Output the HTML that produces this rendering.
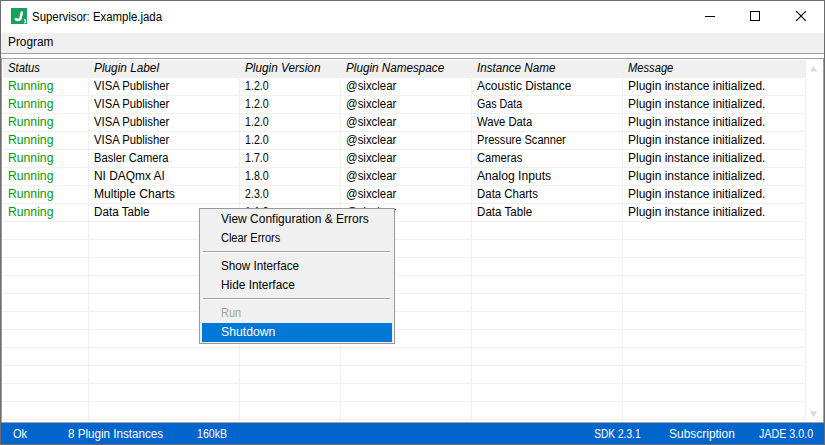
<!DOCTYPE html>
<html><head><meta charset="utf-8">
<style>
*{box-sizing:border-box}
html,body{margin:0;padding:0}
body{width:825px;height:445px;position:relative;overflow:hidden;background:#fff;font-family:"Liberation Sans",sans-serif;font-size:12px;color:#000}
.a{position:absolute}
.t{position:absolute;white-space:nowrap;line-height:18px;height:18px}
.vl{position:absolute;width:1px;background:#f0f0f0}
.hl{position:absolute;height:1px;background:#f0f0f0}
</style></head><body>
<div class="a" style="left:0;top:0;width:825px;height:445px;border:1px solid #6b6b6b"></div>
<svg class="a" style="left:11px;top:8px" width="16" height="16" viewBox="0 0 16 16">
<rect width="16" height="16" fill="#17a060"/>
<path d="M10.8 4.4 L9.6 9.9 Q9.1 11.9 6.8 11.9 Q5.5 11.9 4.8 11.1" stroke="#fff" stroke-width="2.5" fill="none" stroke-linecap="round"/>
<path d="M13.1 11.6 Q14.6 11.6 14.6 13 L14.6 13.6 Q14.6 14.8 13.1 14.8" stroke="#fff" stroke-width="1.3" fill="none"/>
</svg>
<div class="a" style="left:705px;top:16px;width:10px;height:1px;background:#000"></div>
<div class="a" style="left:750px;top:11px;width:10px;height:10px;border:1px solid #000"></div>
<svg class="a" style="left:796px;top:11px" width="10" height="10" viewBox="0 0 10 10"><path d="M0 0L10 10M10 0L0 10" stroke="#000" stroke-width="1.15"/></svg>
<div class="a" style="left:1px;top:33px;width:823px;height:21px;background:#f0f0f0;border-bottom:1px solid #a0a0a0"></div>
<div class="a" style="left:1px;top:58px;width:823px;height:365px;border:1px solid #a0a0a0"></div>
<div class="a" style="left:3px;top:60px;width:802px;height:18px;background:#f0f0f0"></div>
<div class="hl" style="left:2px;top:95px;width:803px"></div>
<div class="hl" style="left:2px;top:113px;width:803px"></div>
<div class="hl" style="left:2px;top:131px;width:803px"></div>
<div class="hl" style="left:2px;top:149px;width:803px"></div>
<div class="hl" style="left:2px;top:167px;width:803px"></div>
<div class="hl" style="left:2px;top:185px;width:803px"></div>
<div class="hl" style="left:2px;top:203px;width:803px"></div>
<div class="hl" style="left:2px;top:221px;width:803px"></div>
<div class="hl" style="left:2px;top:239px;width:803px"></div>
<div class="hl" style="left:2px;top:257px;width:803px"></div>
<div class="hl" style="left:2px;top:275px;width:803px"></div>
<div class="hl" style="left:2px;top:293px;width:803px"></div>
<div class="hl" style="left:2px;top:311px;width:803px"></div>
<div class="hl" style="left:2px;top:329px;width:803px"></div>
<div class="hl" style="left:2px;top:347px;width:803px"></div>
<div class="hl" style="left:2px;top:365px;width:803px"></div>
<div class="hl" style="left:2px;top:383px;width:803px"></div>
<div class="hl" style="left:2px;top:401px;width:803px"></div>
<div class="hl" style="left:2px;top:419px;width:803px"></div>
<div class="vl" style="left:88px;top:78px;height:344px"></div>
<div class="vl" style="left:239px;top:78px;height:344px"></div>
<div class="vl" style="left:340px;top:78px;height:344px"></div>
<div class="vl" style="left:471px;top:78px;height:344px"></div>
<div class="vl" style="left:622px;top:78px;height:344px"></div>
<div class="vl" style="left:805px;top:60px;height:361px"></div>
<svg class="a" style="left:809px;top:65px" width="10" height="8" viewBox="0 0 10 8"><path d="M1 6.5 L4.5 1 L8 6.5Z" fill="#dadada"/></svg>
<svg class="a" style="left:809px;top:410px" width="10" height="9" viewBox="0 0 10 9"><path d="M0.9 1.3 L4.6 7.2 L8.3 1.3Z" fill="#dadada"/></svg>
<div class="a" style="left:1px;top:423px;width:823px;height:21px;background:#0066cc"></div>
<div class="t" style="left:32px;top:8px;transform:scaleX(0.9507);transform-origin:1px 0">Supervisor: Example.jada</div>
<div class="t" style="left:8px;top:33px;transform:scaleX(0.9867);transform-origin:1px 0">Program</div>
<div class="t" style="left:8px;top:59px;transform:scaleX(0.9412);transform-origin:0px 0;font-style:italic">Status</div>
<div class="t" style="left:94px;top:59px;transform:scaleX(0.9851);transform-origin:0px 0;font-style:italic">Plugin Label</div>
<div class="t" style="left:245px;top:59px;transform:scaleX(0.9805);transform-origin:0px 0;font-style:italic">Plugin Version</div>
<div class="t" style="left:346px;top:59px;transform:scaleX(0.9752);transform-origin:0px 0;font-style:italic">Plugin Namespace</div>
<div class="t" style="left:477px;top:59px;transform:scaleX(0.9722);transform-origin:0px 0;font-style:italic">Instance Name</div>
<div class="t" style="left:628px;top:59px;transform:scaleX(0.9306);transform-origin:0px 0;font-style:italic">Message</div>
<div class="t" style="left:8px;top:77px;transform:scaleX(1.0163);transform-origin:1px 0;color:#0a960a">Running</div>
<div class="t" style="left:94px;top:77px;transform:scaleX(0.9413);transform-origin:0px 0">VISA Publisher</div>
<div class="t" style="left:245px;top:77px;transform:scaleX(0.8846);transform-origin:1px 0">1.2.0</div>
<div class="t" style="left:346px;top:77px;transform:scaleX(0.9519);transform-origin:1px 0">@sixclear</div>
<div class="t" style="left:477px;top:77px;transform:scaleX(0.9895);transform-origin:0px 0">Acoustic Distance</div>
<div class="t" style="left:628px;top:77px;transform:scaleX(1.0000);transform-origin:1px 0">Plugin instance initialized.</div>
<div class="t" style="left:8px;top:95px;transform:scaleX(1.0163);transform-origin:1px 0;color:#0a960a">Running</div>
<div class="t" style="left:94px;top:95px;transform:scaleX(0.9413);transform-origin:0px 0">VISA Publisher</div>
<div class="t" style="left:245px;top:95px;transform:scaleX(0.8846);transform-origin:1px 0">1.2.0</div>
<div class="t" style="left:346px;top:95px;transform:scaleX(0.9519);transform-origin:1px 0">@sixclear</div>
<div class="t" style="left:477px;top:95px;transform:scaleX(0.8922);transform-origin:0px 0">Gas Data</div>
<div class="t" style="left:628px;top:95px;transform:scaleX(1.0000);transform-origin:1px 0">Plugin instance initialized.</div>
<div class="t" style="left:8px;top:113px;transform:scaleX(1.0163);transform-origin:1px 0;color:#0a960a">Running</div>
<div class="t" style="left:94px;top:113px;transform:scaleX(0.9413);transform-origin:0px 0">VISA Publisher</div>
<div class="t" style="left:245px;top:113px;transform:scaleX(0.8846);transform-origin:1px 0">1.2.0</div>
<div class="t" style="left:346px;top:113px;transform:scaleX(0.9519);transform-origin:1px 0">@sixclear</div>
<div class="t" style="left:477px;top:113px;transform:scaleX(0.9373);transform-origin:0px 0">Wave Data</div>
<div class="t" style="left:628px;top:113px;transform:scaleX(1.0000);transform-origin:1px 0">Plugin instance initialized.</div>
<div class="t" style="left:8px;top:131px;transform:scaleX(1.0163);transform-origin:1px 0;color:#0a960a">Running</div>
<div class="t" style="left:94px;top:131px;transform:scaleX(0.9413);transform-origin:0px 0">VISA Publisher</div>
<div class="t" style="left:245px;top:131px;transform:scaleX(0.8846);transform-origin:1px 0">1.2.0</div>
<div class="t" style="left:346px;top:131px;transform:scaleX(0.9519);transform-origin:1px 0">@sixclear</div>
<div class="t" style="left:477px;top:131px;transform:scaleX(0.9232);transform-origin:1px 0">Pressure Scanner</div>
<div class="t" style="left:628px;top:131px;transform:scaleX(1.0000);transform-origin:1px 0">Plugin instance initialized.</div>
<div class="t" style="left:8px;top:149px;transform:scaleX(1.0163);transform-origin:1px 0;color:#0a960a">Running</div>
<div class="t" style="left:94px;top:149px;transform:scaleX(0.9278);transform-origin:1px 0">Basler Camera</div>
<div class="t" style="left:245px;top:149px;transform:scaleX(0.8846);transform-origin:1px 0">1.7.0</div>
<div class="t" style="left:346px;top:149px;transform:scaleX(0.9519);transform-origin:1px 0">@sixclear</div>
<div class="t" style="left:477px;top:149px;transform:scaleX(0.9286);transform-origin:0px 0">Cameras</div>
<div class="t" style="left:628px;top:149px;transform:scaleX(1.0000);transform-origin:1px 0">Plugin instance initialized.</div>
<div class="t" style="left:8px;top:167px;transform:scaleX(1.0163);transform-origin:1px 0;color:#0a960a">Running</div>
<div class="t" style="left:94px;top:167px;transform:scaleX(0.9914);transform-origin:1px 0">NI DAQmx AI</div>
<div class="t" style="left:245px;top:167px;transform:scaleX(0.8846);transform-origin:1px 0">1.8.0</div>
<div class="t" style="left:346px;top:167px;transform:scaleX(0.9519);transform-origin:1px 0">@sixclear</div>
<div class="t" style="left:477px;top:167px;transform:scaleX(1.0096);transform-origin:0px 0">Analog Inputs</div>
<div class="t" style="left:628px;top:167px;transform:scaleX(1.0000);transform-origin:1px 0">Plugin instance initialized.</div>
<div class="t" style="left:8px;top:185px;transform:scaleX(1.0163);transform-origin:1px 0;color:#0a960a">Running</div>
<div class="t" style="left:94px;top:185px;transform:scaleX(1.0114);transform-origin:1px 0">Multiple Charts</div>
<div class="t" style="left:245px;top:185px;transform:scaleX(0.8889);transform-origin:0px 0">2.3.0</div>
<div class="t" style="left:346px;top:185px;transform:scaleX(0.9519);transform-origin:1px 0">@sixclear</div>
<div class="t" style="left:477px;top:185px;transform:scaleX(0.9508);transform-origin:1px 0">Data Charts</div>
<div class="t" style="left:628px;top:185px;transform:scaleX(1.0000);transform-origin:1px 0">Plugin instance initialized.</div>
<div class="t" style="left:8px;top:203px;transform:scaleX(1.0163);transform-origin:1px 0;color:#0a960a">Running</div>
<div class="t" style="left:94px;top:203px;transform:scaleX(0.9696);transform-origin:1px 0">Data Table</div>
<div class="t" style="left:245px;top:203px;transform:scaleX(0.8846);transform-origin:1px 0">1.1.0</div>
<div class="t" style="left:346px;top:203px;transform:scaleX(0.9519);transform-origin:1px 0">@sixclear</div>
<div class="t" style="left:477px;top:203px;transform:scaleX(0.9643);transform-origin:1px 0">Data Table</div>
<div class="t" style="left:628px;top:203px;transform:scaleX(1.0000);transform-origin:1px 0">Plugin instance initialized.</div>
<div class="t" style="left:13px;top:425px;transform:scaleX(0.9200);transform-origin:0px 0;color:#fff">Ok</div>
<div class="t" style="left:68px;top:425px;transform:scaleX(0.9694);transform-origin:0px 0;color:#fff">8 Plugin Instances</div>
<div class="t" style="left:197px;top:425px;transform:scaleX(0.8788);transform-origin:1px 0;color:#fff">160kB</div>
<div class="t" style="left:594px;top:425px;transform:scaleX(0.8481);transform-origin:1px 0;color:#fff">SDK 2.3.1</div>
<div class="t" style="left:669px;top:425px;transform:scaleX(0.9969);transform-origin:1px 0;color:#fff">Subscription</div>
<div class="t" style="left:759px;top:425px;transform:scaleX(0.8918);transform-origin:0px 0;color:#fff">JADE 3.0.0</div>
<div class="a" style="left:199px;top:208px;width:196px;height:136px;background:#f0f0f0;border:1px solid #979797"></div>
<div class="a" style="left:203px;top:251px;width:187px;height:1px;background:#a0a0a0"></div><div class="a" style="left:203px;top:252px;width:187px;height:1px;background:#fff"></div>
<div class="a" style="left:203px;top:298px;width:187px;height:1px;background:#a0a0a0"></div><div class="a" style="left:203px;top:299px;width:187px;height:1px;background:#fff"></div>
<div class="a" style="left:202px;top:323px;width:190px;height:19px;background:#0078d7"></div>
<div class="t" style="left:221px;top:210px;transform:scaleX(0.9986);transform-origin:0px 0">View Configuration &amp; Errors</div>
<div class="t" style="left:221px;top:229px;transform:scaleX(0.9154);transform-origin:0px 0">Clear Errors</div>
<div class="t" style="left:221px;top:257px;transform:scaleX(0.9747);transform-origin:1px 0">Show Interface</div>
<div class="t" style="left:221px;top:276px;transform:scaleX(0.9865);transform-origin:1px 0">Hide Interface</div>
<div class="t" style="left:221px;top:304px;transform:scaleX(0.9048);transform-origin:1px 0;color:#a0a0a0">Run</div>
<div class="t" style="left:221px;top:323px;transform:scaleX(1.0192);transform-origin:1px 0;color:#fff">Shutdown</div>
</body></html>
